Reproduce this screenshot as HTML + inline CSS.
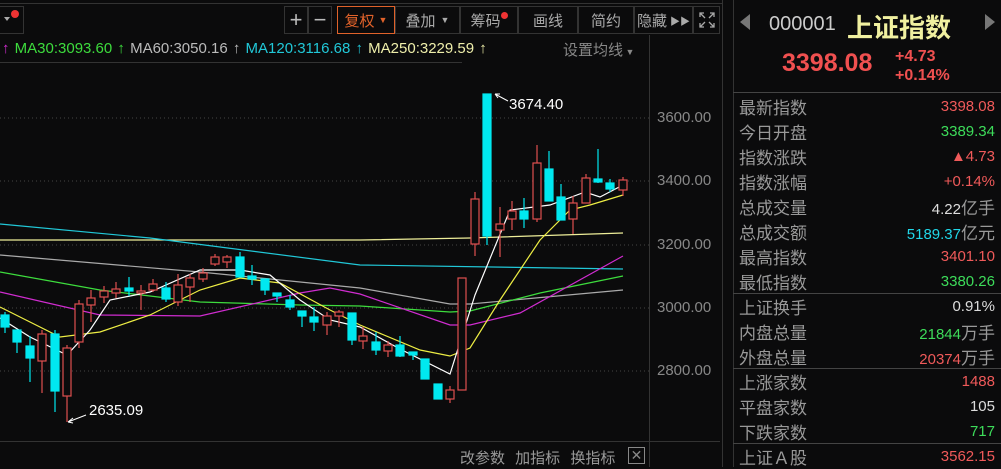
<!DOCTYPE html>
<html><head><meta charset="utf-8"><style>
*{margin:0;padding:0;box-sizing:border-box}
body{width:1001px;height:467px;background:#0b0b0c;overflow:hidden;position:relative;font-family:"Liberation Sans","Noto Sans CJK SC",sans-serif;color:#aaa}
.a{position:absolute;white-space:nowrap}
.tb{position:absolute;top:6px;height:28px;border:1px solid #333;display:flex;align-items:center;justify-content:center;font-size:15px;color:#aaa}
.row{position:absolute;left:739px;width:256px;height:25px;font-size:17px;display:flex;justify-content:space-between;align-items:center}
.row span:first-child{color:#999}
.r{color:#f05a5a}.g{color:#3ddc5a}.w{color:#ddd}.c{color:#21d7e8}
</style></head><body>
<div class="a" style="left:0;top:3px;width:723px;height:1px;background:#333"></div>
<div class="a" style="left:0;top:6px;width:24px;height:28px;border:1px solid #333;border-left:none"></div>
<div class="a" style="left:4px;top:17px;width:0;height:0;border-left:3px solid transparent;border-right:3px solid transparent;border-top:4px solid #aaa"></div>
<div class="a" style="left:11px;top:10px;width:8px;height:8px;border-radius:50%;background:#e33"></div>
<div class="tb" style="left:284px;width:24px;font-size:22px;color:#bbb">+</div>
<div class="tb" style="left:308px;width:24px;font-size:22px;color:#bbb">−</div>
<div class="tb" style="left:337px;width:58px;border-color:#e0622a;color:#e0622a">复权 <span style="font-size:9px;margin-left:4px">▼</span></div>
<div class="tb" style="left:395px;width:65px">叠加 <span style="font-size:9px;margin-left:5px">▼</span></div>
<div class="tb" style="left:460px;width:58px">筹码<span style="display:inline-block;width:7px;height:7px;border-radius:50%;background:#e33;margin-top:-10px"></span></div>
<div class="tb" style="left:518px;width:60px">画线</div>
<div class="tb" style="left:578px;width:56px">简约</div>
<div class="tb" style="left:634px;width:59px">隐藏 <span style="font-size:10px;margin-left:3px">▶▶</span></div>
<div class="tb" style="left:693px;width:27px"><svg width="18" height="18" viewBox="0 0 18 18" stroke="#aaa" fill="none" stroke-width="1.3"><path d="M2 6V2h4M2 2l5 5M12 2h4v4M16 2l-5 5M2 12v4h4M2 16l5-5M16 12v4h-4M16 16l-5-5"/></svg></div>
<div class="a" style="left:2px;top:39px;font-size:15px;line-height:20px;word-spacing:1px">
<span style="color:#d02cd0">↑</span> <span style="color:#3ddc3d">MA30:3093.60 ↑</span> <span style="color:#bbb">MA60:3050.16 ↑</span> <span style="color:#21c8d8">MA120:3116.68 ↑</span> <span style="color:#eeeeaa">MA250:3229.59 ↑</span>
</div>
<div class="a" style="left:563px;top:39px;font-size:15px;color:#888">设置均线<span style="font-size:9px"> ▼</span></div>
<div class="a" style="left:0;top:62px;width:462px;height:1px;background:#333"></div>
<div class="a" style="left:649px;top:35px;width:1px;height:432px;background:#333"></div>
<div class="a" style="left:0;top:441px;width:720px;height:1px;background:#333"></div>
<div class="a" style="left:722px;top:0;width:1px;height:467px;background:#333"></div>
<div class="a" style="left:733px;top:0;width:1px;height:467px;background:#333"></div>
<div class="a" style="left:657px;top:109px;font-size:15px;color:#888">3600.00</div>
<div class="a" style="left:657px;top:172px;font-size:15px;color:#888">3400.00</div>
<div class="a" style="left:657px;top:236px;font-size:15px;color:#888">3200.00</div>
<div class="a" style="left:657px;top:299px;font-size:15px;color:#888">3000.00</div>
<div class="a" style="left:657px;top:362px;font-size:15px;color:#888">2800.00</div>
<svg class="a" style="left:0;top:0" width="649" height="441">
<g stroke="#444" stroke-dasharray="1,3"><line x1="0" y1="118" x2="649" y2="118"/><line x1="0" y1="181" x2="649" y2="181"/><line x1="0" y1="245" x2="649" y2="245"/><line x1="0" y1="308" x2="649" y2="308"/><line x1="0" y1="371" x2="649" y2="371"/></g>
<g fill="none" stroke-width="1.2">
<polyline stroke="#eeee99" points="0,240 360,240 470,238 623,233"/>
<polyline stroke="#21c8d8" points="0,224 150,238 360,265 623,269"/>
<polyline stroke="#aaa" points="0,255 200,272 360,288 450,304 470,304 623,290"/>
<polyline stroke="#3ddc3d" points="0,272 100,290 200,302 300,305 360,306 450,312 470,311 540,293 623,276"/>
<polyline stroke="#d02cd0" points="0,292 100,315 200,316 300,293 330,288 360,294 450,325 470,325 520,313 623,256"/>
<polyline stroke="#eeee44" points="0,307 60,337 100,332 150,315 200,290 240,278 280,283 330,310 360,325 420,350 450,356 470,348 500,300 540,240 570,210 590,205 623,195"/>
<polyline stroke="#fff" points="0,318 30,337 67,355 90,330 110,300 150,292 200,270 240,270 270,275 300,300 330,320 360,327 400,349 450,374 475,295 510,210 550,205 585,192 600,197 623,185"/>
</g>
<g stroke="#e05050" fill="#0b0b0c" stroke-width="1.2">
<line x1="42" y1="330" x2="42" y2="393"/><rect x="38" y="334" width="8" height="27"/>
<line x1="67" y1="345" x2="67" y2="422"/><rect x="63" y="348" width="8" height="48"/>
<line x1="79" y1="300" x2="79" y2="348"/><rect x="75" y="304" width="8" height="38"/>
<line x1="91" y1="290" x2="91" y2="322"/><rect x="87" y="298" width="8" height="7"/>
<line x1="104" y1="286" x2="104" y2="303"/><rect x="100" y="291" width="8" height="6"/>
<line x1="116" y1="282" x2="116" y2="298"/><rect x="112" y="289" width="8" height="4"/>
<line x1="141" y1="285" x2="141" y2="310"/><rect x="137" y="291" width="8" height="2"/>
<line x1="153" y1="279" x2="153" y2="292"/><rect x="149" y="284" width="8" height="6"/>
<line x1="178" y1="274" x2="178" y2="306"/><rect x="174" y="285" width="8" height="17"/>
<line x1="190" y1="274" x2="190" y2="302"/><rect x="186" y="278" width="8" height="9"/>
<line x1="203" y1="268" x2="203" y2="282"/><rect x="199" y="273" width="8" height="6"/>
<line x1="215" y1="254" x2="215" y2="266"/><rect x="211" y="257" width="8" height="7"/>
<line x1="227" y1="255" x2="227" y2="268"/><rect x="223" y="257" width="8" height="5"/>
<line x1="327" y1="312" x2="327" y2="335"/><rect x="323" y="316" width="8" height="9"/>
<line x1="339" y1="310" x2="339" y2="327"/><rect x="335" y="312" width="8" height="4"/>
<line x1="363" y1="327" x2="363" y2="349"/><rect x="359" y="336" width="8" height="5"/>
<line x1="388" y1="341" x2="388" y2="357"/><rect x="384" y="345" width="8" height="6"/>
<line x1="450" y1="386" x2="450" y2="403"/><rect x="446" y="390" width="8" height="9"/>
<rect x="458" y="278" width="8" height="112"/>
<line x1="475" y1="192" x2="475" y2="256"/><rect x="471" y="199" width="8" height="45"/>
<line x1="500" y1="207" x2="500" y2="257"/><rect x="496" y="224" width="8" height="6"/>
<line x1="512" y1="201" x2="512" y2="230"/><rect x="508" y="211" width="8" height="8"/>
<line x1="537" y1="145" x2="537" y2="222"/><rect x="533" y="163" width="8" height="56"/>
<line x1="573" y1="196" x2="573" y2="234"/><rect x="569" y="203" width="8" height="16"/>
<line x1="586" y1="174" x2="586" y2="203"/><rect x="582" y="178" width="8" height="25"/>
<line x1="623" y1="177" x2="623" y2="196"/><rect x="619" y="180" width="8" height="10"/>
</g>
<g stroke="#00e8f0" fill="#00e8f0" stroke-width="1.2">
<line x1="5" y1="312" x2="5" y2="333"/><rect x="1" y="315" width="8" height="12"/>
<line x1="17" y1="330" x2="17" y2="353"/><rect x="13" y="330" width="8" height="12"/>
<line x1="30" y1="336" x2="30" y2="382"/><rect x="26" y="346" width="8" height="12"/>
<line x1="55" y1="330" x2="55" y2="412"/><rect x="51" y="334" width="8" height="57"/>
<line x1="129" y1="277" x2="129" y2="296"/><rect x="125" y="288" width="8" height="3"/>
<line x1="166" y1="282" x2="166" y2="302"/><rect x="162" y="288" width="8" height="11"/>
<line x1="240" y1="252" x2="240" y2="277"/><rect x="236" y="257" width="8" height="20"/>
<line x1="252" y1="265" x2="252" y2="285"/><rect x="248" y="276" width="8" height="3"/>
<line x1="265" y1="279" x2="265" y2="295"/><rect x="261" y="279" width="8" height="11"/>
<line x1="277" y1="293" x2="277" y2="302"/><rect x="273" y="293" width="8" height="3"/>
<line x1="290" y1="295" x2="290" y2="310"/><rect x="286" y="300" width="8" height="7"/>
<line x1="302" y1="311" x2="302" y2="327"/><rect x="298" y="311" width="8" height="5"/>
<line x1="314" y1="307" x2="314" y2="331"/><rect x="310" y="317" width="8" height="5"/>
<line x1="352" y1="313" x2="352" y2="345"/><rect x="348" y="313" width="8" height="27"/>
<line x1="376" y1="332" x2="376" y2="355"/><rect x="372" y="342" width="8" height="8"/>
<line x1="400" y1="336" x2="400" y2="357"/><rect x="396" y="345" width="8" height="11"/>
<line x1="413" y1="352" x2="413" y2="360"/><rect x="409" y="352" width="8" height="3"/>
<rect x="421" y="359" width="8" height="20"/>
<rect x="434" y="384" width="8" height="15"/>
<line x1="487" y1="94" x2="487" y2="245"/><rect x="483" y="94" width="8" height="142"/>
<line x1="524" y1="198" x2="524" y2="228"/><rect x="520" y="211" width="8" height="8"/>
<line x1="549" y1="151" x2="549" y2="201"/><rect x="545" y="169" width="8" height="32"/>
<line x1="561" y1="184" x2="561" y2="220"/><rect x="557" y="197" width="8" height="23"/>
<line x1="598" y1="149" x2="598" y2="183"/><rect x="594" y="179" width="8" height="3"/>
<line x1="610" y1="179" x2="610" y2="192"/><rect x="606" y="183" width="8" height="6"/>
</g>
<g stroke="#fff" fill="none"><path d="M495,94 L508,101 M495,94 l5,0 M495,94 l3,4"/><path d="M68,422 L86,415 M68,422 l5,-4 M68,422 l5,1"/></g>
<text x="509" y="109" fill="#fff" font-size="15" font-family="Liberation Sans">3674.40</text>
<text x="89" y="415" fill="#fff" font-size="15" font-family="Liberation Sans">2635.09</text>
</svg>
<div class="a" style="left:460px;top:447px;font-size:15px;color:#999;word-spacing:6px">改参数 加指标 换指标</div>
<div class="a" style="left:628px;top:447px;width:17px;height:17px;border:1px solid #888;color:#888;font-size:14px;line-height:15px;text-align:center">✕</div>
<div class="a" style="left:740px;top:14px;width:0;height:0;border-top:8px solid transparent;border-bottom:8px solid transparent;border-right:10px solid #777"></div>
<div class="a" style="left:985px;top:14px;width:0;height:0;border-top:8px solid transparent;border-bottom:8px solid transparent;border-left:10px solid #777"></div>
<div class="a" style="left:769px;top:13px;font-size:20px;color:#ccc">000001</div>
<div class="a" style="left:847px;top:8px;font-size:26px;color:#f0f0a0;font-weight:bold">上证指数</div>
<div class="a" style="left:782px;top:49px;font-size:25px;color:#f05050;font-weight:bold">3398.08</div>
<div class="a" style="left:895px;top:47px;font-size:16px;color:#f05050;font-weight:bold;line-height:19px">+4.73<br>+0.14%</div>
<div class="a" style="left:733px;top:92px;width:268px;height:1px;background:#444"></div>
<div class="a" style="left:733px;top:293px;width:268px;height:1px;background:#444"></div>
<div class="a" style="left:733px;top:368px;width:268px;height:1px;background:#444"></div>
<div class="a" style="left:733px;top:443px;width:268px;height:1px;background:#444"></div>
<div class="row" style="top:94px"><span>最新指数</span><span class="r" style="font-size:15px">3398.08</span></div>
<div class="row" style="top:119px"><span>今日开盘</span><span class="g" style="font-size:15px">3389.34</span></div>
<div class="row" style="top:144px"><span>指数涨跌</span><span class="r" style="font-size:15px">▲4.73</span></div>
<div class="row" style="top:169px"><span>指数涨幅</span><span class="r" style="font-size:15px">+0.14%</span></div>
<div class="row" style="top:194px"><span>总成交量</span><span class="w" style="font-size:15px">4.22<span style="font-size:17px">亿手</span></span></div>
<div class="row" style="top:219px"><span>总成交额</span><span class="c" style="font-size:15px">5189.37<span style="font-size:17px">亿元</span></span></div>
<div class="row" style="top:244px"><span>最高指数</span><span class="r" style="font-size:15px">3401.10</span></div>
<div class="row" style="top:269px"><span>最低指数</span><span class="g" style="font-size:15px">3380.26</span></div>
<div class="row" style="top:294px"><span>上证换手</span><span class="w" style="font-size:15px">0.91%</span></div>
<div class="row" style="top:319px"><span>内盘总量</span><span class="g" style="font-size:15px">21844<span style="font-size:17px">万手</span></span></div>
<div class="row" style="top:344px"><span>外盘总量</span><span class="r" style="font-size:15px">20374<span style="font-size:17px">万手</span></span></div>
<div class="row" style="top:369px"><span>上涨家数</span><span class="r" style="font-size:15px">1488</span></div>
<div class="row" style="top:394px"><span>平盘家数</span><span class="w" style="font-size:15px">105</span></div>
<div class="row" style="top:419px"><span>下跌家数</span><span class="g" style="font-size:15px">717</span></div>
<div class="row" style="top:444px"><span>上证Ａ股</span><span class="r" style="font-size:15px">3562.15</span></div>
</body></html>
